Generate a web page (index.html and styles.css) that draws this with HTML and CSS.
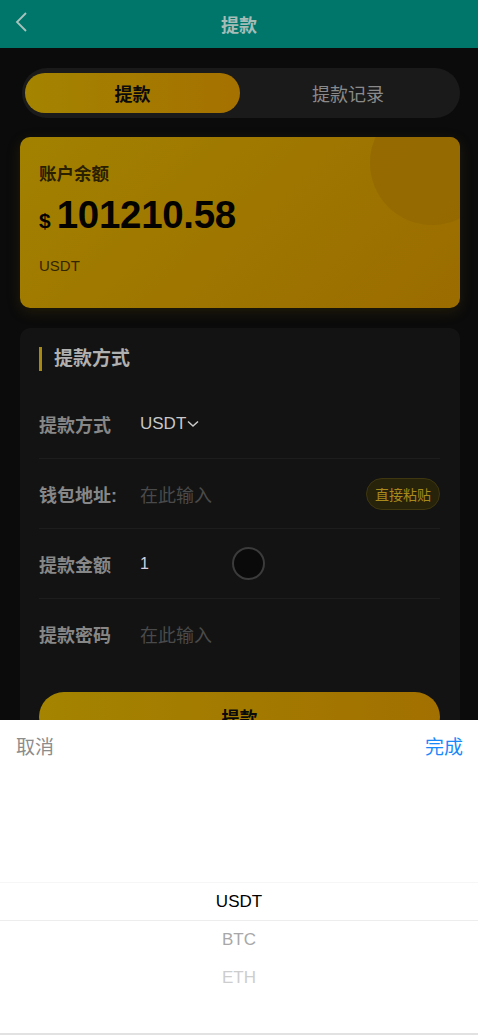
FILE: index.html
```html
<!DOCTYPE html>
<html lang="zh">
<head>
<meta charset="utf-8">
<title>提款</title>
<link rel="stylesheet" href="styles.css">
</head>
<body>
<div class="page">
  <header class="topbar">
    <span class="back">
      <svg width="14" height="22" viewBox="0 0 14 22"><polyline points="11,2 2,11 11,20" fill="none" stroke="#a9c2bd" stroke-width="1.8"/></svg>
    </span>
    <h1 class="title">提款</h1>
  </header>

  <main class="main">
    <div class="tabs">
      <div class="tab active">提款</div>
      <div class="tab">提款记录</div>
    </div>

    <section class="balance">
      <div class="balance-circle"></div>
      <div class="balance-label">账户余额</div>
      <div class="balance-amount"><span class="cur">$</span><span class="num">101210.58</span></div>
      <div class="balance-unit">USDT</div>
    </section>

    <section class="form">
      <div class="form-title">提款方式</div>
      <div class="row">
        <div class="label">提款方式</div>
        <div class="value">USDT<svg class="caret" width="12" height="8" viewBox="0 0 12 8"><polyline points="1,1.5 6,6 11,1.5" fill="none" stroke="#c8c8c8" stroke-width="1.6"/></svg></div>
      </div>
      <div class="row">
        <div class="label">钱包地址:</div>
        <div class="value placeholder">在此输入</div>
        <div class="paste">直接粘贴</div>
      </div>
      <div class="row">
        <div class="label">提款金额</div>
        <div class="value amount">1</div>
        <div class="spinner"></div>
      </div>
      <div class="row last">
        <div class="label">提款密码</div>
        <div class="value placeholder">在此输入</div>
      </div>
      <div class="submit">提款</div>
    </section>
  </main>
</div>

<div class="sheet">
  <div class="sheet-head">
    <span class="cancel">取消</span>
    <span class="confirm">完成</span>
  </div>
  <div class="picker">
    <div class="picker-list">
      <div class="opt sel">USDT</div>
      <div class="opt o1">BTC</div>
      <div class="opt o2">ETH</div>
    </div>
    <div class="picker-frame"></div>
  </div>
</div>
</body>
</html>
```

FILE: styles.css
```css
* { box-sizing: border-box; margin: 0; padding: 0; }
html, body { height: 100%; }
body {
  background: #0b0b0b;
  font-family: "Liberation Sans", "Noto Sans CJK SC", sans-serif;
  overflow: hidden;
}
.page { min-height: 100%; }

.topbar {
  height: 48px;
  background: #00766a;
  display: flex;
  align-items: center;
  justify-content: center;
  position: relative;
}
.back {
  position: absolute;
  left: 15px;
  top: 11px;
  display: flex;
}
.title {
  font-size: 18px;
  font-weight: bold;
  color: #a6bcb7;
}

.main { padding: 20px 18px 0 20px; }

.tabs {
  margin-left: 2px;
  height: 50px;
  border-radius: 25px;
  background: #1a1a1a;
  display: flex;
  align-items: center;
  padding: 0 4px 0 3px;
}
.tab {
  flex: 1;
  height: 40px;
  border-radius: 20px;
  display: flex;
  align-items: center;
  justify-content: center;
  font-size: 18px;
  color: #8a8a8a;
}
.tab.active {
  flex: 0 0 215px;
  background: linear-gradient(90deg, #a48400, #a57100);
  color: #0b0b0b;
  font-weight: bold;
}

.balance {
  margin-top: 19px;
  height: 171px;
  border-radius: 10px;
  background: linear-gradient(135deg, #a28100 0%, #9b6c00 100%);
  box-shadow: 0 4px 14px rgba(110, 85, 0, 0.22);
  padding: 25px 19px 0;
  position: relative;
  overflow: hidden;
}
.balance-circle {
  position: absolute;
  right: -34px;
  top: -36px;
  width: 124px;
  height: 124px;
  border-radius: 50%;
  background: #946800;
  opacity: 0.85;
}
.balance-label {
  position: relative;
  font-size: 17.5px;
  font-weight: bold;
  color: #2a2000;
  line-height: 24px;
}
.balance-amount {
  position: relative;
  display: flex;
  align-items: baseline;
  margin-top: 5px;
  line-height: 48px;
}
.cur { font-size: 21px; font-weight: bold; color: #050300; margin-right: 6px; }
.num { font-size: 38.5px; font-weight: bold; color: #050300; letter-spacing: -0.3px; }
.balance-unit {
  position: relative;
  margin-top: 12px;
  font-size: 15px;
  color: #332600;
}

.form {
  margin-top: 20px;
  background: #131313;
  border-radius: 10px;
  padding: 19px 20px 0 19px;
  height: 420px;
}
.form-title {
  border-left: 3px solid #a88a10;
  padding-left: 12px;
  height: 24px;
  line-height: 24px;
  font-size: 19px;
  font-weight: bold;
  color: #b0b0b0;
  margin-bottom: 18px;
}
.row {
  height: 70px;
  display: flex;
  align-items: center;
  border-bottom: 1px solid #1d1d1d;
}
.row.last { border-bottom: none; }
.label {
  width: 101px;
  font-size: 18px;
  font-weight: bold;
  color: #878787;
}
.value {
  flex: 1;
  font-size: 17px;
  color: #c8c8c8;
  display: flex;
  align-items: center;
}
.caret { margin-left: 1px; margin-top: 1px; }
.placeholder { color: #4a4a4a; font-size: 18px; }
.amount { flex: 0 0 92px; color: #d0d0e0; font-size: 16px; }
.spinner {
  width: 33px;
  height: 33px;
  border-radius: 50%;
  border: 2px solid #3b3b3b;
  background: #0a0a0a;
}
.paste {
  height: 32px;
  padding: 0 8px;
  border-radius: 16px;
  background: #27220a;
  border: 1px solid #3e370f;
  color: #a8891c;
  font-size: 14px;
  display: flex;
  align-items: center;
}
.submit {
  margin-top: 23px;
  height: 50px;
  border-radius: 25px;
  background: linear-gradient(90deg, #a48400, #a27000);
  color: #0b0b0b;
  font-size: 18px;
  font-weight: bold;
  display: flex;
  align-items: center;
  justify-content: center;
}

.sheet {
  position: fixed;
  left: 0;
  right: 0;
  bottom: 0;
  height: 315px;
  background: #fff;
  border-bottom: 2px solid #e2e2e2;
}
.sheet-head {
  height: 50px;
  display: flex;
  align-items: center;
  justify-content: space-between;
  padding: 0 15px 0 16px;
  font-size: 19px;
}
.cancel { color: #8c8c8c; }
.confirm { color: #1989fa; }
.picker {
  position: relative;
  height: 263px;
  overflow: hidden;
}
.picker-list { padding-top: 113px; }
.opt {
  height: 38px;
  display: flex;
  align-items: center;
  justify-content: center;
  font-size: 17px;
  color: #000;
}
.o1 { color: #a8a8a8; }
.o2 { color: #cdcdcd; }
.picker-frame {
  position: absolute;
  left: 0;
  right: 0;
  top: 112px;
  height: 39px;
  border-top: 1px solid #f6f6f6;
  border-bottom: 1px solid #ededed;
  pointer-events: none;
}
```
